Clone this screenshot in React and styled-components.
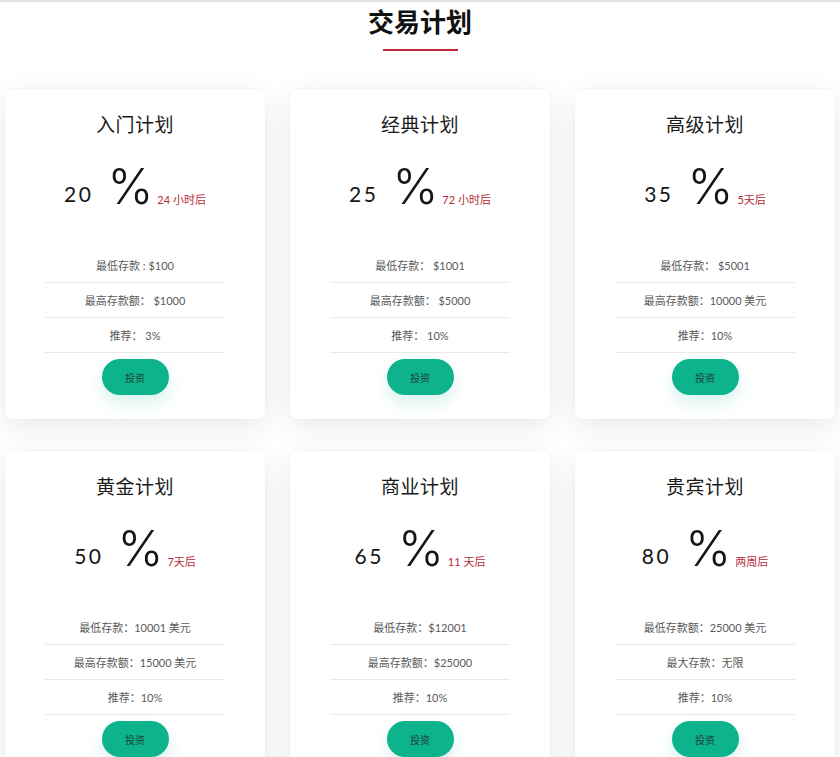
import React from "react";
import styled, { createGlobalStyle } from "styled-components";

const Global = createGlobalStyle`
  html, body { margin: 0; padding: 0; background: #ffffff; }
  body { font-family: "Lato", "Noto Sans CJK SC", sans-serif; color: #222; }
  * { box-sizing: border-box; }
`;

const Page = styled.div`
  border-top: 2px solid #e2e2e2;
  width: 840px;
  padding-bottom: 40px;
`;

const Header = styled.header`
  display: flex;
  flex-direction: column;
  align-items: center;
  padding-top: 4px;
`;

const Heading = styled.h1`
  margin: 0;
  font-family: "Noto Sans CJK SC", sans-serif;
  font-size: 26px;
  font-weight: 700;
  line-height: 30px;
  color: #111;
`;

const Underline = styled.div`
  width: 75px;
  height: 2px;
  background: #c3283a;
  margin-top: 13px;
`;

const Grid = styled.div`
  display: grid;
  grid-template-columns: repeat(3, 260px);
  column-gap: 25px;
  row-gap: 32px;
  padding: 38px 5px 0;
`;

const Card = styled.div`
  background: #fff;
  border-radius: 7px;
  box-shadow: 0 8px 30px rgba(0, 0, 0, 0.09), 0 0 2px rgba(0, 0, 0, 0.07);
  padding: 24px 40px 23px;
  display: flex;
  flex-direction: column;
  align-items: center;
  height: 330px;
`;

const PlanName = styled.h2`
  margin: 0;
  font-family: "Noto Sans CJK SC", sans-serif;
  font-size: 19px;
  font-weight: 400;
  line-height: 22px;
  color: #1a1a1a;
  letter-spacing: 0.5px;
`;

const Rate = styled.div`
  margin-top: 24px;
  height: 56px;
  display: flex;
  align-items: baseline;
  justify-content: center;
  line-height: 56px;
  color: #151515;
`;

const Num = styled.span`
  font-size: 21px;
  font-weight: 400;
  letter-spacing: 2.5px;
  margin-right: 14px;
  position: relative;
  top: -2px;
`;

const Pct = styled.span`
  font-size: 49px;
  font-weight: 300;
  margin-right: 4px;
  font-family: "Inter", "Lato", sans-serif;
`;

const Term = styled.span`
  font-family: "Lato", "Noto Sans CJK SC", sans-serif;
  font-size: 11px;
  color: #b52b37;
`;

const List = styled.ul`
  list-style: none;
  margin: 33px 0 0;
  padding: 0;
  width: 180px;
`;

const Item = styled.li`
  height: 35px;
  display: flex;
  align-items: center;
  justify-content: center;
  border-bottom: 1px solid #e9e9e9;
  font-size: 11px;
  color: #5a5a5a;
  white-space: nowrap;
`;

const Button = styled.button`
  margin-top: 6px;
  width: 67px;
  height: 36px;
  border: none;
  border-radius: 18px;
  background: #0db38c;
  color: #1f3f37;
  font-family: "Noto Sans CJK SC", sans-serif;
  font-size: 10px;
  box-shadow: 0 8px 16px rgba(13, 179, 140, 0.16);
  cursor: pointer;
`;

const plans = [
  { name: "入门计划", rate: "20", term: "24 小时后", rows: ["最低存款 : $100", "最高存款额： $1000", "推荐： 3%"] },
  { name: "经典计划", rate: "25", term: "72 小时后", rows: ["最低存款： $1001", "最高存款额： $5000", "推荐： 10%"] },
  { name: "高级计划", rate: "35", term: "5天后", rows: ["最低存款： $5001", "最高存款额：10000 美元", "推荐：10%"] },
  { name: "黄金计划", rate: "50", term: "7天后", rows: ["最低存款：10001 美元", "最高存款额：15000 美元", "推荐：10%"] },
  { name: "商业计划", rate: "65", term: "11 天后", rows: ["最低存款：$12001", "最高存款额：$25000", "推荐：10%"] },
  { name: "贵宾计划", rate: "80", term: "两周后", rows: ["最低存款额：25000 美元", "最大存款：无限", "推荐：10%"] },
];

export default function App() {
  return (
    <Page>
      <Global />
      <Header>
        <Heading>交易计划</Heading>
        <Underline />
      </Header>
      <Grid>
        {plans.map((p) => (
          <Card key={p.name}>
            <PlanName>{p.name}</PlanName>
            <Rate>
              <Num>{p.rate}</Num>
              <Pct>%</Pct>
              <Term>{p.term}</Term>
            </Rate>
            <List>
              {p.rows.map((r) => (
                <Item key={r}>{r}</Item>
              ))}
            </List>
            <Button>投资</Button>
          </Card>
        ))}
      </Grid>
    </Page>
  );
}
